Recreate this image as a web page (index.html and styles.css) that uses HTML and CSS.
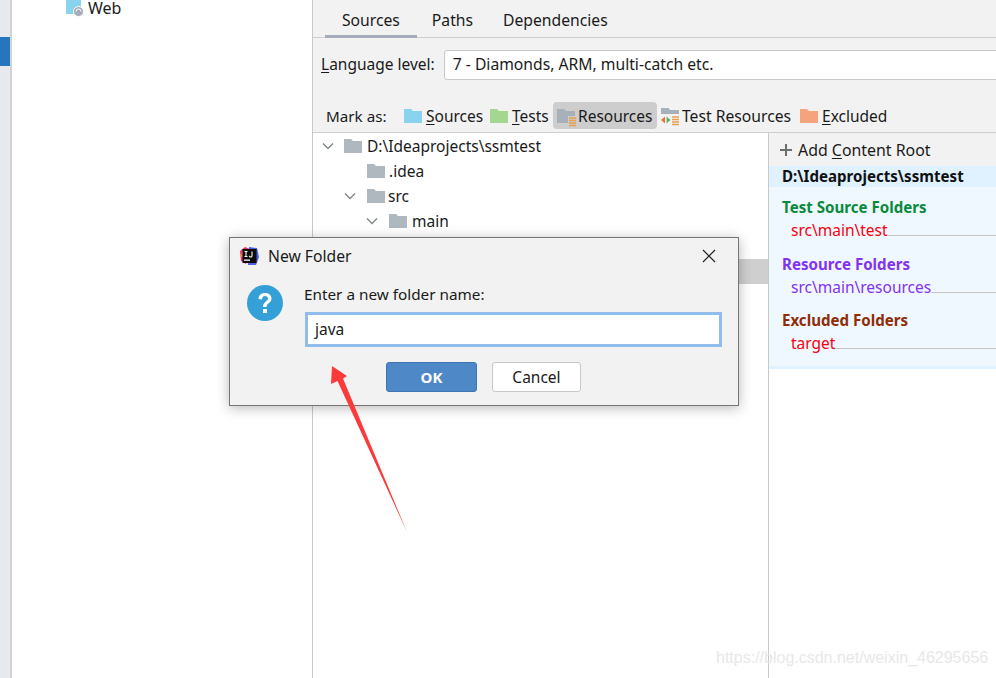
FILE: index.html
```html
<!DOCTYPE html>
<html lang="en">
<head>
<meta charset="utf-8">
<title>New Folder</title>
<link rel="stylesheet" href="styles.css">
</head>
<body>
<svg class="defs" width="0" height="0" aria-hidden="true">
  <defs>
    <symbol id="folder" viewBox="0 0 18 16"><path d="M0 1h7l2 2h9v12H0z"/></symbol>
  </defs>
</svg>
<div class="app">
  <div class="rail"><div class="rail-mark"></div></div>
  <div class="modules">
    <div class="module-row">
      <svg class="web-icon" width="19" height="18" viewBox="0 0 19 18"><rect x="0" y="0" width="15" height="15" fill="#8ad3ef"/><circle cx="12.500" cy="12.500" r="5" fill="#a4adb5" stroke="#fff"/><path d="M10 12.500a2.500 2.500 0 0 1 5 0" fill="none" stroke="#fff"/></svg>
      <span>Web</span>
    </div>
  </div>
  <div class="content">
    <div class="tabs">
      <span class="tab active">Sources</span>
      <span class="tab">Paths</span>
      <span class="tab">Dependencies</span>
    </div>
    <div class="settings">
      <div class="lang-row">
        <span class="lang-label"><u>L</u>anguage level:</span>
        <div class="combo">7 - Diamonds, ARM, multi-catch etc.</div>
      </div>
      <div class="mark-row">
        <span class="mark-label">Mark as:</span>
        <span class="mark m-sources"><svg class="ic blue" width="18" height="16"><use href="#folder"/></svg><span><u>S</u>ources</span></span>
        <span class="mark m-tests"><svg class="ic green" width="18" height="16"><use href="#folder"/></svg><span><u>T</u>ests</span></span>
        <span class="mark m-res">
          <svg width="20" height="20" viewBox="0 0 20 20"><path d="M0 2h7l2 2h9v12H0z" fill="#a7b1b9"/><path d="M11 9h9v11h-9z" fill="#cccccc"/><path d="M12 11h7M12 13.500h7M12 16h7M12 18.500h7" stroke="#e5a14f" stroke-width="1.400"/></svg>
          <span>Resources</span>
        </span>
        <span class="mark m-testres">
          <svg width="20" height="20" viewBox="0 0 20 20"><path d="M1 1h7l2 2h9v12H1z" fill="#a7b1b9"/><path d="M0 7h20v13H0z" fill="#f2f2f2"/><path d="M1 1h7l2 2h9v4H1z" fill="#a7b1b9"/><path d="M5 9.500v7l-4-3.500z" fill="#e8743c"/><path d="M6.500 9.500v7l4-3.500z" fill="#5fb15f"/><path d="M12 10h7M12 12.500h7M12 15h7M12 17.500h7" stroke="#e5a14f" stroke-width="1.400"/></svg>
          <span>Test Resources</span>
        </span>
        <span class="mark m-excl"><svg class="ic orange" width="18" height="16"><use href="#folder"/></svg><span><u>E</u>xcluded</span></span>
      </div>
    </div>
    <div class="lower">
      <div class="tree">
        <div class="node n0"><svg class="chev" width="12" height="8" viewBox="0 0 12 8"><path d="M1 1.500l5 5 5-5" fill="none" stroke="#7f8589" stroke-width="1.300"/></svg><svg class="ic gray" width="18" height="16"><use href="#folder"/></svg><span>D:\Ideaprojects\ssmtest</span></div>
        <div class="node n1"><svg class="ic gray" width="18" height="16"><use href="#folder"/></svg><span>.idea</span></div>
        <div class="node n1x"><svg class="chev" width="12" height="8" viewBox="0 0 12 8"><path d="M1 1.500l5 5 5-5" fill="none" stroke="#7f8589" stroke-width="1.300"/></svg><svg class="ic gray" width="18" height="16"><use href="#folder"/></svg><span>src</span></div>
        <div class="node n2"><svg class="chev" width="12" height="8" viewBox="0 0 12 8"><path d="M1 1.500l5 5 5-5" fill="none" stroke="#7f8589" stroke-width="1.300"/></svg><svg class="ic gray" width="18" height="16"><use href="#folder"/></svg><span>main</span></div>
        <div class="node selected"></div>
      </div>
      <aside class="roots">
        <div class="add-root">
          <svg width="14" height="14" viewBox="0 0 14 14"><path d="M7 1v12M1 7h12" stroke="#6e6e6e" stroke-width="2"/></svg>
          <span>Add <u>C</u>ontent Root</span>
        </div>
        <div class="root-card">
          <div class="root-title">D:\Ideaprojects\ssmtest</div>
          <div class="root-body">
            <div class="group">
              <div class="group-title c-test">Test Source Folders</div>
              <div class="entry c-red"><span>src\main\test</span><i></i></div>
            </div>
            <div class="group">
              <div class="group-title c-res">Resource Folders</div>
              <div class="entry c-res"><span>src\main\resources</span><i></i></div>
            </div>
            <div class="group group-last">
              <div class="group-title c-excl">Excluded Folders</div>
              <div class="entry c-red"><span>target</span><i></i></div>
            </div>
          </div>
        </div>
      </aside>
    </div>
  </div>
</div>

<div class="dialog">
  <div class="dlg-title">
    <svg class="dlg-logo" width="20" height="20" viewBox="0 0 20 20"><path d="M1 5l5-4 5 2-4 15-5-3z" fill="#f0326a"/><path d="M10 1l8 1 2 9-3 8-8 0z" fill="#4f5fe8"/><path d="M2 10l2-6 5 1-3 9z" fill="#f59a2b"/><rect x="3.500" y="3" width="14" height="14" fill="#0b0b0b"/><rect x="5" y="13.500" width="6" height="1.300" fill="#fff"/><path d="M5.500 5.500h3M7 5.500v5M5.500 10.500h3M13 5.500v4.200a1.300 1.300 0 0 1-2.600 0" fill="none" stroke="#fff" stroke-width="1.100"/></svg>
    <span>New Folder</span>
    <svg class="dlg-close" width="14" height="14" viewBox="0 0 14 14"><path d="M1 1l12 12M13 1L1 13" stroke="#222" stroke-width="1.200"/></svg>
  </div>
  <div class="dlg-body">
    <svg class="dlg-q" width="36" height="36" viewBox="0 0 36 36"><circle cx="18" cy="18" r="18" fill="#35a0d8"/><path d="M11.500 14c0-4 3-6 6.500-6s6.500 2 6.500 5.500c0 4.500-5 4.500-5 8.500h-3.500c0-5.500 5-5.500 5-8.500 0-1.500-1.300-2.500-3-2.500s-3 1-3 3.500z" fill="#fff"/><rect x="16" y="24" width="4" height="4" fill="#fff"/></svg>
    <div class="dlg-main">
      <div class="dlg-prompt">Enter a new folder name:</div>
      <div class="dlg-input">java</div>
    </div>
  </div>
  <div class="dlg-actions">
    <span class="btn btn-ok">OK</span>
    <span class="btn btn-cancel">Cancel</span>
  </div>
</div>

<svg class="arrow" width="90" height="175" viewBox="0 0 90 175"><path d="M2 1L1 19l6.500-3L77 167 13 13.500 17 11z" fill="#fb3a3a"/></svg>

<div class="watermark">https://blog.csdn.net/weixin_46295656</div>
</body>
</html>
```

FILE: styles.css
```css
* { box-sizing: border-box; }
html, body { margin: 0; height: 100%; overflow: hidden; }
body {
  position: relative;
  font-family: "Noto Sans", "Open Sans", sans-serif;
  font-size: 15.500px;
  color: #1a1a1a;
  background: #fff;
}
.defs { position: absolute; }
u { text-underline-offset: 2px; text-decoration-thickness: 1px; }

.app { display: flex; height: 678px; }

.rail {
  width: 12px;
  flex: none;
  padding-top: 37px;
  background: #e6eaee;
  border-right: 2px solid #d2d2d2;
}
.rail-mark { height: 29px; background: #2675bf; }

.modules { width: 300px; flex: none; background: #fff; }
.module-row {
  display: flex;
  align-items: center;
  gap: 3px;
  height: 16px;
  margin-left: 54px;
}
.module-row span { line-height: 14px; font-size: 16px; }
.web-icon { flex: none; }

.content {
  flex: 1;
  min-width: 0;
  display: flex;
  flex-direction: column;
  border-left: 1px solid #c9c9c9;
}

.tabs {
  display: flex;
  height: 38px;
  padding: 0 0 0 12px;
  background: #f2f2f2;
  border-bottom: 1px solid #cfcfcf;
  font-size: 15.700px;
}
.tab {
  padding: 12px 17px 0;
  line-height: 17px;
  margin-bottom: -1px;
}
.tab + .tab { padding-left: 15px; padding-right: 17px; }
.tab:last-child { margin-left: -2px; }
.tab.active { border-bottom: 3px solid #a5adbd; }

.settings {
  height: 95px;
  background: #f2f2f2;
  border-bottom: 1px solid #cfcfcf;
  padding: 12px 0 0 8px;
}
.lang-row { display: flex; align-items: flex-start; gap: 9px; height: 30px; }
.lang-label { line-height: 28px; }
.combo {
  flex: 1;
  height: 30px;
  line-height: 27px;
  margin-right: -10px;
  padding-left: 8px;
  font-size: 15.700px;
  background: #fff;
  border: 1px solid #c9c9c9;
  border-radius: 3px;
}
.mark-row { display: flex; align-items: center; height: 27px; margin-top: 22px; padding-left: 5px; }
.mark-label { width: 78px; flex: none; font-size: 15.200px; }
.mark { display: flex; align-items: center; height: 27px; flex: none; }
.m-sources { gap: 4px; width: 86px; }
.m-tests { gap: 4px; width: 63px; }
.m-res { gap: 1px; width: 104px; padding-left: 4px; background: #cdcdcd; border-radius: 4px; }
.m-res svg { margin-top: 3px; }
.m-testres { gap: 2px; width: 143px; padding-left: 3px; font-size: 15.700px; }
.m-testres svg { margin-top: 3px; }
.m-excl { gap: 4px; }

.ic { fill: #a9b3ba; flex: none; }
.ic.blue { fill: #8ad3ef; }
.ic.green { fill: #a3d78f; }
.ic.orange { fill: #f4a37c; }
.ic.gray { fill: #afb8be; }

.lower { flex: 1; display: flex; min-height: 0; }
.tree { width: 456px; flex: none; border-right: 1px solid #c9c9c9; background: #fff; }
.node { display: flex; align-items: center; height: 25px; gap: 5px; }
.chev { flex: none; margin-right: 5px; }
.n0 { padding-left: 9px; }
.n1 { padding-left: 54px; gap: 4px; }
.n1x { padding-left: 31px; gap: 3px; }
.n1x .chev { margin-right: 8px; }
.n2 { padding-left: 53px; gap: 5px; }
.n2 .chev { margin-right: 6px; }
.selected { height: 25px; margin-top: 26px; background: #cfcfcf; }

.roots { flex: 1; min-width: 0; }
.add-root {
  display: flex;
  align-items: center;
  gap: 5px;
  height: 33px;
  padding-left: 10px;
  font-size: 15.900px;
  background: #f2f2f2;
}
.root-card { background: #eff7ff; border-bottom: 3px solid #e0f2ff; }
.root-title {
  height: 21px;
  line-height: 21px;
  padding-left: 13px;
  font-weight: 700;
  font-size: 15.100px;
  color: #111;
  background: #e0f2ff;
}
.root-body { padding: 9px 0 7px; height: 179px; }
.group { padding-left: 13px; height: 57px; }
.group-last { margin-top: -1px; }
.group-title { font-weight: 700; line-height: 23px; font-size: 15.100px; }
.entry { display: flex; align-items: flex-end; line-height: 23px; padding-left: 9px; height: 23px; }
.entry span { flex: none; }
.entry i { flex: 1; height: 1px; margin-bottom: 6px; background: #c4c4c4; }
.c-test { color: #0a8a3c; }
.c-res { color: #8133f0; }
.c-excl { color: #8f2d08; }
.c-red { color: #f5000f; }

.dialog {
  position: absolute;
  left: 229px;
  top: 237px;
  width: 510px;
  height: 169px;
  background: #f2f2f2;
  border: 1px solid #757575;
  box-shadow: 0 2px 12px rgba(0, 0, 0, 0.28);
}
.dlg-title { display: flex; align-items: center; height: 36px; padding: 0 22px 0 9px; font-size: 15.700px; }
.dlg-logo { flex: none; margin-right: 9px; }
.dlg-close { margin-left: auto; }
.dlg-body { display: flex; padding: 10px 16px 0 17px; height: 88px; }
.dlg-q { flex: none; margin: 1px 21px 0 0; }
.dlg-main { flex: 1; min-width: 0; }
.dlg-prompt { line-height: 20px; font-size: 15.300px; }
.dlg-input {
  height: 35px;
  margin: 8px 0 0 1px;
  line-height: 29px;
  padding-left: 7px;
  background: #fff;
  border: 3px solid #90bdec;
}
.dlg-actions { display: flex; justify-content: flex-end; gap: 15px; padding-right: 157px; }
.btn {
  height: 30px;
  display: flex;
  align-items: center;
  justify-content: center;
  border-radius: 3px;
}
.btn-ok { width: 91px; color: #fff; font-weight: 700; font-size: 15px; background: #4f88c6; border: 1px solid #3f75b0; }
.btn-cancel { width: 89px; background: #fff; border: 1px solid #c8c8c8; }

.arrow { position: absolute; left: 330px; top: 365px; }
.watermark {
  position: absolute;
  left: 716px;
  top: 649px;
  font-family: "Liberation Sans", sans-serif;
  font-size: 16px;
  color: #e8e8e8;
}
```
